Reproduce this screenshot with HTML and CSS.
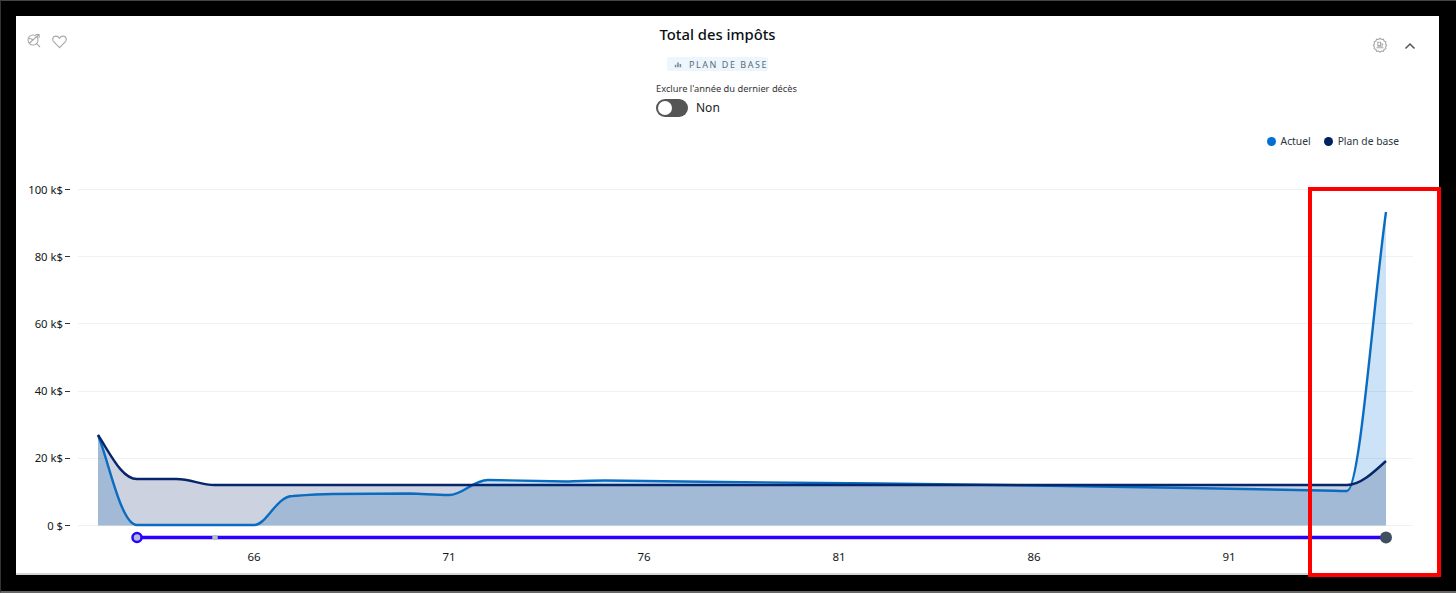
FILE: index.html
```html
<!DOCTYPE html>
<html lang="fr">
<head>
<meta charset="utf-8">
<title>Total des impôts</title>
<link rel="stylesheet" href="styles.css">
</head>
<body>
<main class="panel">
  <header class="head">
    <div class="tools tools-left">
      <svg class="icon" viewBox="0 0 16 16"><circle cx="7" cy="8" r="5"/><path d="M10.700 11.700 14 15M3 11.500 12.500 3M9.500 2.500h3.600v3.400M2.800 7c1.600-1.600 3 1 4.400.4"/></svg>
      <svg class="icon heart" viewBox="0 0 16 16"><path d="M8 13.800 2.400 8.200C.9 6.600 1.400 3.400 4.200 3c1.600-.2 3 .7 3.800 2 .8-1.300 2.200-2.200 3.800-2 2.800.4 3.300 3.600 1.800 5.200z"/></svg>
    </div>
    <div class="center">
      <h1 class="title">Total des impôts</h1>
      <div class="badge">
        <svg class="badge-icon" viewBox="0 0 10 10"><path d="M1 9V6h2v3zM4 9V3h2v6zM7 9V5h2v4z"/></svg>
        <span>PLAN DE BASE</span>
      </div>
      <div class="toggle-block">
        <div class="toggle-label">Exclure l'année du dernier décès</div>
        <div class="toggle-row">
          <span class="switch"><span class="knob"></span></span>
          <span class="toggle-value">Non</span>
        </div>
      </div>
    </div>
    <div class="tools tools-right">
      <svg class="icon gear" viewBox="0 0 16 16"><path d="M8 1.300 9.500 2.500 11.400 2.200 12.100 4 13.800 4.900 13.500 6.800 14.700 8.300 13.500 9.800 13.800 11.700 12.100 12.500 11.400 14.300 9.500 14 8 15.200 6.500 14 4.600 14.300 3.900 12.500 2.200 11.700 2.500 9.800 1.300 8.300 2.500 6.800 2.200 4.900 3.900 4 4.600 2.200 6.500 2.500z"/><path d="M4.500 10.800h7M5.500 9.200h5M5.800 5.200h2.800v3.400H5.800zM8.600 7h2v1.600"/></svg>
      <svg class="chevron" viewBox="0 0 12 8"><path d="M1.500 6.500 6 2l4.500 4.500"/></svg>
    </div>
  </header>
  <div class="legend">
    <span class="legend-item"><i class="dot dot-current"></i>Actuel</span>
    <span class="legend-item"><i class="dot dot-base"></i>Plan de base</span>
  </div>
  <svg class="chart" viewBox="16 150 1423 420" width="1423" height="420">
    <path class="grid" d="M78 189.500H1413M78 256.500H1413M78 323.500H1413M78 391.500H1413M78 458.500H1413M78 525.500H1413"/>
    <path class="ticks" d="M65 189.500h5M65 256.500h5M65 323.500h5M65 391.500h5M65 458.500h5M65 525.500h5"/>
    <g class="ylabels">
      <text x="63" y="193.500">100 k$</text>
      <text x="63" y="260.500">80 k$</text>
      <text x="63" y="327.500">60 k$</text>
      <text x="63" y="395">40 k$</text>
      <text x="63" y="462">20 k$</text>
      <text x="63" y="529.500">0 $</text>
    </g>
    <path class="area-current" d="M98 435C109 462 121 525 137 525H254C267 525 276 496 293 496C306 495 320 494 332 494L410 493.500C425 494 437 495 449 495C463 495 473 480 488 480L566 481.500C580 481 590 480.500 605 480.500L722 482L878 483.500L1000 485L1034 485.500L1190 488L1334 490.700C1341 491 1346 491 1347 491C1360 491 1373 305 1386 212V525.500H98Z"/>
    <path class="area-base" d="M98 435C111 455 122 479 137 479H176C192 479 200 485 215 485H1347C1360 485 1373 473 1386 461V525.500H98Z"/>
    <path class="line-current" d="M98 435C109 462 121 525 137 525H254C267 525 276 496 293 496C306 495 320 494 332 494L410 493.500C425 494 437 495 449 495C463 495 473 480 488 480L566 481.500C580 481 590 480.500 605 480.500L722 482L878 483.500L1000 485L1034 485.500L1190 488L1334 490.700C1341 491 1346 491 1347 491C1360 491 1373 305 1386 212"/>
    <path class="line-base" d="M98 435C111 455 122 479 137 479H176C192 479 200 485 215 485H1347C1360 485 1373 473 1386 461"/>
    <path class="slider-line" d="M137 537.500H1386"/>
    <circle class="slider-start" cx="137" cy="537.500" r="4.500"/>
    <circle class="slider-mid" cx="215" cy="537.500" r="2.800"/>
    <circle class="slider-end" cx="1386" cy="537.500" r="6"/>
    <g class="xlabels">
      <text x="254" y="561">66</text>
      <text x="449" y="561">71</text>
      <text x="644" y="561">76</text>
      <text x="839" y="561">81</text>
      <text x="1034" y="561">86</text>
      <text x="1229" y="561">91</text>
    </g>
  </svg>
</main>
<div class="highlight"></div>
</body>
</html>
```
FILE: styles.css
```css
* { box-sizing: border-box; }
html, body { margin: 0; height: 593px; overflow: hidden; }
body {
  position: relative;
  background: #000;
  padding: 15px 16px 16px 15px;
  border-top: 1px solid #444;
  border-bottom: 2px solid #666;
  border-left: 1px solid #333;
  font-family: "Noto Sans", "Open Sans", sans-serif;
  color: #1c2733;
}
.panel {
  width: 1423px;
  height: 559px;
  background: #fff;
  border-bottom: 2px solid #d4d4d4;
  display: flex;
  flex-direction: column;
}
.head {
  display: flex;
  flex: none;
  height: 117px;
  justify-content: space-between;
  padding: 0 23px 0 10px;
}
.tools { display: flex; align-items: flex-start; }
.tools-left { gap: 9px; width: 400px; padding-top: 16px; }
.tools-right { gap: 16px; width: 400px; justify-content: flex-end; padding-top: 21px; }
.icon { width: 16px; height: 16px; fill: none; stroke: #a9a9a9; stroke-width: 1.100; }
.heart { width: 17px; height: 17px; margin-top: 1px; }
.gear { stroke: #aaa; }
.chevron { width: 12px; height: 8px; margin-top: 5px; fill: none; stroke: #555; stroke-width: 1.500; }
.center {
  display: flex;
  flex-direction: column;
  align-items: center;
  width: 200px;
  margin-left: -7px;
}
.title {
  margin: 7px 0 0;
  font-size: 14.800px;
  line-height: 22px;
  font-weight: 500;
  color: #0a0f14;
  white-space: nowrap;
}
.badge {
  display: flex;
  align-items: center;
  gap: 7px;
  height: 14px;
  margin-top: 12px;
  padding: 0 0 0 7px;
  background: #edf6fc;
  border-radius: 2px;
  font-size: 9px;
  letter-spacing: 1.550px;
  color: #5b6b7a;
  white-space: nowrap;
}
.badge-icon { width: 8px; height: 8px; fill: #7b8a99; }
.toggle-block { margin-top: 11px; margin-left: 17px; width: 140px; flex: none; }
.toggle-label { font-size: 9.300px; line-height: 14px; color: #333; white-space: nowrap; }
.toggle-row { display: flex; align-items: center; gap: 8px; margin-top: 3px; }
.switch {
  display: block;
  width: 32px;
  height: 18px;
  border-radius: 9px;
  background: #555;
  padding: 2px;
}
.knob { display: block; width: 14px; height: 14px; border-radius: 50%; background: #fff; }
.toggle-value { font-size: 12px; line-height: 18px; color: #222; }
.legend {
  display: flex;
  flex: none;
  justify-content: flex-end;
  gap: 13px;
  height: 16px;
  padding-right: 40px;
  font-size: 10.300px;
  line-height: 16px;
  color: #2a3642;
}
.legend-item { display: flex; align-items: center; gap: 5px; }
.dot { width: 9px; height: 9px; border-radius: 50%; }
.dot-current { background: #0070d2; }
.dot-base { background: #002060; }
.chart { display: block; flex: none; margin-top: 1px; }
.grid { fill: none; stroke: #f1f1f1; stroke-width: 1; }
.ticks { fill: none; stroke: #333; stroke-width: 1; }
.ylabels text { font-size: 11.300px; text-anchor: end; fill: #111820; }
.xlabels text { font-size: 11.500px; text-anchor: middle; fill: #111820; }
.area-current { fill: #0070d2; fill-opacity: .2; }
.area-base { fill: #002060; fill-opacity: .2; }
.line-current { fill: none; stroke: #0a6cc0; stroke-width: 2.400; }
.line-base { fill: none; stroke: #06266b; stroke-width: 2.400; }
.slider-line { fill: none; stroke: #2b00ff; stroke-width: 3.500; }
.slider-start { fill: #aebfd2; stroke: #2b00ff; stroke-width: 2.500; }
.slider-mid { fill: #aebfcc; }
.slider-end { fill: #3f4f5f; }
.highlight {
  position: absolute;
  left: 1307px;
  top: 186px;
  width: 133px;
  height: 390px;
  border: 4px solid #f00;
}
```
